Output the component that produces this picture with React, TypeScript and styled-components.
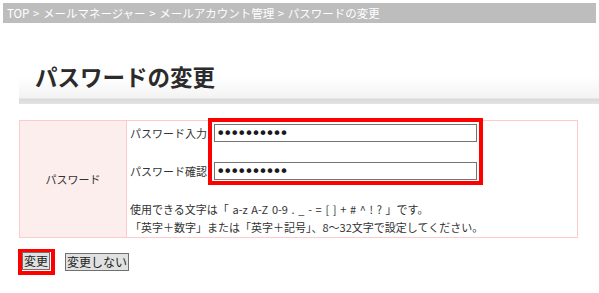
import styled, { createGlobalStyle } from "styled-components";

const GlobalStyle = createGlobalStyle`
  body {
    margin: 0;
    background: #ffffff;
    font-family: "Noto Sans CJK JP", "Liberation Sans", sans-serif;
    color: #333333;
  }
`;

function App() {
  const crumbs = ["TOP", "メールマネージャー", "メールアカウント管理", "パスワードの変更"];

  return (
    <Page>
      <GlobalStyle />
      <Breadcrumb>{crumbs.join(" > ")}</Breadcrumb>
      <Heading>パスワードの変更</Heading>
      <FormTable>
        <tbody>
          <tr>
            <HeadCell>パスワード</HeadCell>
            <FieldCell>
              <InputGroup>
                <Labels>
                  <Label>パスワード入力</Label>
                  <Label>パスワード確認</Label>
                </Labels>
                <Highlight>
                  <PasswordInput type="password" value="abcdefghij" readOnly />
                  <PasswordInput type="password" value="abcdefghij" readOnly />
                </Highlight>
              </InputGroup>
              <Help>
                使用できる文字は「 a-z A-Z 0-9 . _ - = [ ] { } + # ^ ! ? 」です。
                <br />
                「英字＋数字」または「英字＋記号」、8〜32文字で設定してください。
              </Help>
            </FieldCell>
          </tr>
        </tbody>
      </FormTable>
      <Actions>
        <ButtonMark>
          <Button>変更</Button>
        </ButtonMark>
        <Button>変更しない</Button>
      </Actions>
    </Page>
  );
}

const Page = styled.div`
  width: 599px;
  height: 293px;
  overflow: hidden;
`;

const Breadcrumb = styled.div`
  margin: 3px 3px 0 3px;
  height: 20px;
  line-height: 20px;
  padding-left: 4px;
  background-color: #bdbdbd;
  color: #ffffff;
  font-size: 11.5px;
  word-spacing: 1px;
  white-space: nowrap;
`;

const Heading = styled.h1`
  margin: 32px 0 0 19px;
  height: 49px;
  box-sizing: border-box;
  padding: 9px 0 0 16px;
  font-size: 22.5px;
  line-height: 24px;
  font-weight: 700;
  color: #2b2b2b;
  background: linear-gradient(
    to bottom,
    #ffffff 0px,
    #ffffff 22px,
    #f3f3f3 43px,
    #d9d9d9 44px,
    #e4e4e4 49px
  );
`;

const FormTable = styled.table`
  margin: 16px 0 0 19px;
  width: 559px;
  border-collapse: collapse;
  font-size: 11px;
`;

const HeadCell = styled.th`
  width: 106px;
  padding: 0;
  border: 1px solid #ffcaca;
  background-color: #fdeeee;
  font-weight: 400;
  vertical-align: middle;
  text-align: center;
  color: #333333;
`;

const FieldCell = styled.td`
  padding: 0 0 1px 3px;
  border: 1px solid #ffcaca;
  vertical-align: top;
`;

const InputGroup = styled.div`
  display: flex;
  margin-top: -3px;
`;

const Labels = styled.div`
  width: 78px;
  display: flex;
  flex-direction: column;
  gap: 20px;
  padding-top: 6px;
`;

const Label = styled.div`
  height: 18px;
  line-height: 18px;
  white-space: nowrap;
`;

const Highlight = styled.div`
  display: flex;
  flex-direction: column;
  gap: 20px;
  padding: 2px 2px 1px 2px;
  border: 4px solid #ff0000;
`;

const PasswordInput = styled.input`
  box-sizing: border-box;
  width: 263px;
  height: 18px;
  margin: 0;
  padding: 0 1px;
  border: 1px solid #747474;
  outline: none;
  font-family: "DejaVu Sans", sans-serif;
  font-size: 16px;
  letter-spacing: -2.4px;
  color: #1a1a1a;
`;

const Help = styled.div`
  margin-top: 15px;
  line-height: 18px;
  word-spacing: 1.2px;
  white-space: nowrap;
`;

const Actions = styled.div`
  display: flex;
  align-items: center;
  gap: 10px;
  margin: 11px 0 0 18px;
`;

const ButtonMark = styled.div`
  display: flex;
  padding: 0 1px 1px 0;
  border: 4px solid #ff0000;
  border-top-width: 3px;
`;

const Button = styled.button`
  height: 18px;
  margin: 0;
  padding: 0 1px;
  border: 1px solid #707070;
  background-color: #e1e1e1;
  font-family: "Noto Sans CJK JP", sans-serif;
  font-size: 12px;
  line-height: 16px;
  color: #222222;
`;

export default App;
